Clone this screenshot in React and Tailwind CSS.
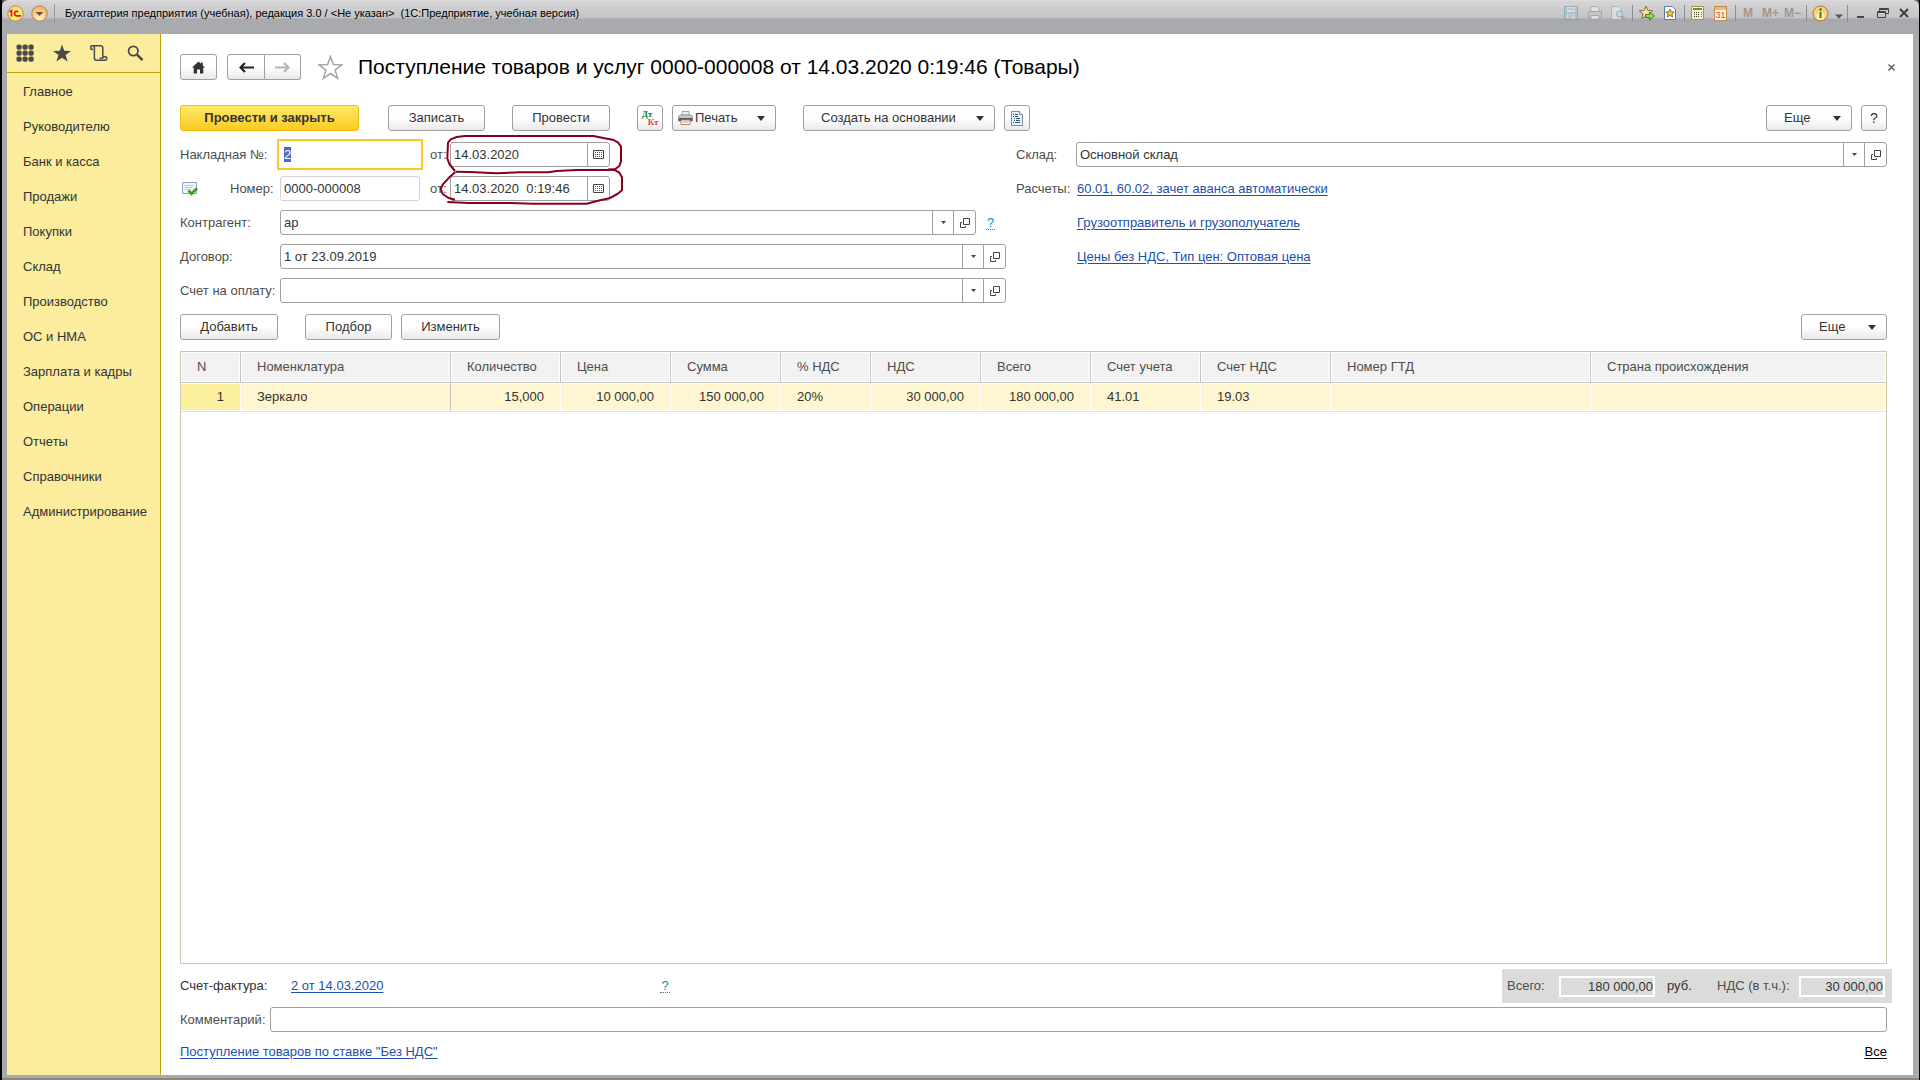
import { useEffect, useRef } from "react";

const MENU = [
  "Главное", "Руководителю", "Банк и касса", "Продажи", "Покупки", "Склад", "Производство",
  "ОС и НМА", "Зарплата и кадры", "Операции", "Отчеты", "Справочники", "Администрирование",
];

const COLUMNS = [
  { title: "N", width: "w-[60px]", value: "1", right: true },
  { title: "Номенклатура", width: "w-[210px]", value: "Зеркало", strong: true },
  { title: "Количество", width: "w-[110px]", value: "15,000", right: true },
  { title: "Цена", width: "w-[110px]", value: "10 000,00", right: true },
  { title: "Сумма", width: "w-[110px]", value: "150 000,00", right: true },
  { title: "% НДС", width: "w-[90px]", value: "20%" },
  { title: "НДС", width: "w-[110px]", value: "30 000,00", right: true },
  { title: "Всего", width: "w-[110px]", value: "180 000,00", right: true },
  { title: "Счет учета", width: "w-[110px]", value: "41.01" },
  { title: "Счет НДС", width: "w-[130px]", value: "19.03" },
  { title: "Номер ГТД", width: "w-[260px]", value: "" },
  { title: "Страна происхождения", width: "", value: "" },
];

const STAR = "M12 1.500l2.700 7.700 8.300.2-6.500 5.100 2.300 7.900L12 17.800l-6.800 4.600 2.300-7.900L1 9.400l8.300-.2z";

function Caret({ small }) {
  return small ? (
    <svg width="5" height="3" viewBox="0 0 5 3" aria-hidden="true"><path d="M0 0h5L2.500 3z" fill="#444" /></svg>
  ) : (
    <svg width="8" height="5" viewBox="0 0 8 5" aria-hidden="true"><path d="M0 0h8L4 5z" fill="#333" /></svg>
  );
}

function OpenIcon() {
  return (
    <svg width="10" height="10" viewBox="0 0 10 10" fill="none" stroke="#444" aria-hidden="true">
      <path d="M3.500 .5h6v6h-6zM2 4.500H.5v5h5V8" />
    </svg>
  );
}

function CalendarIcon() {
  return (
    <svg width="11" height="9" viewBox="0 0 11 9" aria-hidden="true">
      <path d="M.5.5h10v8H.5z" fill="none" stroke="#444" />
      <path d="M2 2.500h7M2 4.500h7M2 6.500h7" stroke="#555" strokeDasharray="1 1" />
    </svg>
  );
}

function Button({ className, children, ...rest }) {
  return (
    <button
      type="button"
      className={`flex h-[26px] shrink-0 items-center rounded-[3px] border border-[#a0a0a0] bg-linear-to-b from-white from-50% to-[#e9e9e9] text-[#333] ${className}`}
      {...rest}
    >
      {children}
    </button>
  );
}

function MoreButton({ label }) {
  return (
    <Button className="w-[86px] justify-between pr-[10px] pl-[17px]" aria-label={label}>
      Еще <Caret />
    </Button>
  );
}

const BOX = "flex h-[25px] rounded-[3px] border border-[#a0a0a0] bg-white";

function Combo({ id, value }) {
  return (
    <div className={`${BOX} min-w-0 flex-1`}>
      <input id={id} defaultValue={value} className="min-w-0 flex-1 px-[3px] text-[#333] outline-none" />
      <button type="button" aria-label="Выбрать из списка" className="flex w-[21px] items-center justify-center border-l border-[#a0a0a0]"><Caret small /></button>
      <button type="button" aria-label="Открыть" className="flex w-[22px] items-center justify-center border-l border-[#a0a0a0]"><OpenIcon /></button>
    </div>
  );
}

function DateField({ id, value }) {
  return (
    <div className={`${BOX} w-[160px]`}>
      <input id={id} defaultValue={value} className="min-w-0 flex-1 px-[3px] text-[#333] outline-none" />
      <button type="button" aria-label="Календарь" className="flex w-[22px] items-center justify-center border-l border-[#a0a0a0]"><CalendarIcon /></button>
    </div>
  );
}

function Help() {
  return <a href="#help" className="border-b border-dotted border-[#1a86c0] px-px leading-[13px] text-[#1a86c0]">?</a>;
}

const LINK = "text-[#1c4fae] underline underline-offset-2";

function TitleBar() {
  const sep = "h-[17px] w-px bg-[#8e8e90]";
  const memory = "text-[12px] font-bold text-[#a3958e]";
  return (
    <header className="flex h-[34px] shrink-0 items-start justify-between rounded-t-[6px] border-t border-[#dcdcdc] bg-linear-to-b from-[#d6d6d8] from-0% via-[#c4c4c6] via-50% to-[#a9aaad] to-55% pr-[10px] pl-[5px]">
      <div className="flex h-[24px] items-center">
        <svg width="17" height="17" viewBox="0 0 17 17" aria-hidden="true">
          <defs>
            <radialGradient id="logo" cx=".5" cy=".75" r=".7"><stop offset="0" stopColor="#fff36a" /><stop offset="1" stopColor="#fbd978" /></radialGradient>
            <radialGradient id="orb" cx=".5" cy=".8" r=".8"><stop offset="0" stopColor="#fff0c4" /><stop offset="1" stopColor="#f0b060" /></radialGradient>
          </defs>
          <circle cx="8.500" cy="8.500" r="7.700" fill="url(#logo)" stroke="#b88a4a" />
          <path d="M2.500 6.800l2-1.300v6" fill="none" stroke="#d5201c" strokeWidth="1.600" />
          <path d="M11.200 7a2.200 2.200 0 1 0-1.600 3.800h4.400" fill="none" stroke="#d5201c" strokeWidth="1.700" />
        </svg>
        <svg className="ml-[7px]" width="17" height="17" viewBox="0 0 17 17" aria-hidden="true">
          <circle cx="8.500" cy="8.500" r="7.700" fill="url(#orb)" stroke="#a98358" />
          <path d="M4.500 7h8l-4 4z" fill="#6d5540" />
        </svg>
        <span className="ml-[6px] h-[19px] w-px bg-[#98989a]" />
        <h1 className="ml-[10px] text-[11px] whitespace-pre text-black">{"Бухгалтерия предприятия (учебная), редакция 3.0 / <Не указан>  (1С:Предприятие, учебная версия)"}</h1>
      </div>
      <div className="flex h-[24px] items-center">
        <button type="button" aria-label="Сохранить" className="opacity-60">
          <svg width="16" height="16" viewBox="0 0 16 16"><path d="M1.500 1.500h13v13h-13z" fill="#9dbdd2" stroke="#6f97b0" /><path d="M4 2h8v5H4zM4 9.500h8V14H4z" fill="#e4e9ec" /><path d="M5 11h6M5 13h4M5 4h6" stroke="#7fa2b8" /></svg>
        </button>
        <button type="button" aria-label="Печать" className="ml-[8px] opacity-60">
          <svg width="16" height="16" viewBox="0 0 16 16"><path d="M4 1.500h6l2 2V7H4z" fill="#eee" stroke="#8fa3b0" /><path d="M1.500 6.500h13v6h-13z" fill="#c9beb8" stroke="#988c86" /><path d="M4 10.500h8v4H4z" fill="#eee" stroke="#b48f7c" /></svg>
        </button>
        <button type="button" aria-label="Предварительный просмотр" className="ml-[7px] opacity-60">
          <svg width="16" height="16" viewBox="0 0 16 16"><path d="M1.500 1.500h7l3 3v10h-10z" fill="#e5eaee" stroke="#93a9b8" /><circle cx="9.500" cy="9" r="3" fill="#c8dfee" stroke="#7a9cb3" /><path d="M11.500 11l3.500 3.500" stroke="#a98a78" strokeWidth="2" /></svg>
        </button>
        <span className={`ml-[6px] ${sep}`} />
        <button type="button" aria-label="Добавить в избранное" className="ml-[6px]">
          <svg width="16" height="16" viewBox="0 0 16 16"><path d="M7 1l1.800 4.400 4.900.4-3.700 3 1.200 4.700L7 11l-4.200 2.500L4 8.800.3 5.800l4.900-.4z" fill="#ffe2a0" stroke="#8b6a3c" /><path d="M6.500 9.500h4V7l5 4-5 4v-2.500h-4z" fill="#8be04a" stroke="#2c7a18" strokeWidth=".9" /></svg>
        </button>
        <button type="button" aria-label="Избранное" className="ml-[8px]">
          <svg width="14" height="16" viewBox="0 0 14 16"><path d="M1.500 1.500h8l3 3v10h-11z" fill="#fff" stroke="#557a9c" /><path d="M7 4l1.200 2.800 3 .2-2.300 2 .8 3L7 10.400 4.300 12l.8-3-2.300-2 3-.2z" fill="#ffc94d" stroke="#6b5230" strokeWidth=".8" /></svg>
        </button>
        <span className={`ml-[7px] ${sep}`} />
        <button type="button" aria-label="Калькулятор" className="ml-[6px]">
          <svg width="13" height="16" viewBox="0 0 13 16"><path d="M.5 1.500h12v13H.5z" fill="#fff3c8" stroke="#b58a50" /><path d="M2 3h9v2H2z" fill="#45a03c" /><path d="M3 7.500h6M3 9.500h6M3 11.500h6" stroke="#3a3028" strokeDasharray="1 1" /><path d="M10.500 7v5" stroke="#d8473a" strokeDasharray="1 1" /></svg>
        </button>
        <button type="button" aria-label="Календарь" className="ml-[10px] flex h-[15px] w-[13px] flex-col border border-[#c08a50] bg-[#fff6dc]">
          <span className="h-[3px] w-full bg-[#f3b96a]" />
          <span className="w-full text-center text-[9px] leading-[10px] text-[#e23a20]">31</span>
        </button>
        <span className={`ml-[8px] ${sep}`} />
        <span className={`ml-[7px] ${memory}`}>M</span>
        <span className={`ml-[9px] ${memory}`}>M+</span>
        <span className={`ml-[5px] ${memory}`}>M−</span>
        <span className={`ml-[5px] ${sep}`} />
        <button type="button" aria-label="Информация" className="ml-[5px]">
          <svg width="17" height="17" viewBox="0 0 17 17"><circle cx="8.500" cy="8.500" r="7.500" fill="#fbd07c" stroke="#a87838" /><circle cx="8.500" cy="11" r="4" fill="#ffe9a8" /><path d="M8.500 7v6" stroke="#3f7a1c" strokeWidth="2" /><circle cx="8.500" cy="4.500" r="1.200" fill="#3f7a1c" /></svg>
        </button>
        <svg className="mt-[6px] ml-[6px]" width="8" height="5" viewBox="0 0 8 5" aria-hidden="true"><path d="M0 .5h8L4 4.500z" fill="#555" /></svg>
        <span className={`ml-[4px] ${sep}`} />
        <button type="button" aria-label="Свернуть" className="ml-[9px]">
          <svg width="8" height="12" viewBox="0 0 8 12"><path d="M0 10h7" stroke="#444" strokeWidth="2" /></svg>
        </button>
        <button type="button" aria-label="Восстановить" className="ml-[12px]">
          <svg width="12" height="10" viewBox="0 0 12 10" fill="none" stroke="#444"><path d="M2.500 3V.5h9v5H9" /><path d="M3 1.500h8" /><path d="M.5 3.500h8v6h-8zM.5 4.500h8" /></svg>
        </button>
        <button type="button" aria-label="Закрыть" className="ml-[10px]">
          <svg width="10" height="10" viewBox="0 0 10 10"><path d="M1 1l8 8M9 1L1 9" stroke="#444" strokeWidth="2.200" /></svg>
        </button>
      </div>
    </header>
  );
}

function Sidebar() {
  return (
    <nav className="flex w-[154px] shrink-0 flex-col border-r border-[#bfa20d] bg-[#fbec9e]">
      <div className="flex h-[39px] items-center gap-[19px] border-b border-[#bfa20d] pl-[9px] text-[#4a4a4a]">
        <button type="button" aria-label="Разделы">
          <svg width="18" height="18" viewBox="0 0 18 18" fill="currentColor">
            {[3, 9, 15].map((y) => [3, 9, 15].map((x) => <rect key={`${x}-${y}`} x={x - 2.5} y={y - 2.5} width="5.200" height="5.200" rx="1.800" />))}
          </svg>
        </button>
        <button type="button" aria-label="Избранное">
          <svg width="18" height="18" viewBox="0 0 24 24" fill="currentColor"><path d="M12 .5l3 8.500 9 .2-7.200 5.400 2.700 8.800L12 18.200l-7.500 5.200 2.700-8.800L0 9.200 9 9z" /></svg>
        </button>
        <button type="button" aria-label="История">
          <svg width="18" height="17" viewBox="0 0 18 17" fill="none" stroke="currentColor" strokeWidth="1.500"><path d="M3 4.500H2.500a1.900 1.900 0 1 1 1.900-1.900v10.600a2 2 0 0 0 2 2H15a1.800 1.800 0 1 0-1.700-2.400M2.500.800h8.300a2 2 0 0 1 2 2v9.500M13.200 13.200H9.500" /></svg>
        </button>
        <button type="button" aria-label="Поиск">
          <svg width="17" height="17" viewBox="0 0 17 17" fill="none" stroke="currentColor"><circle cx="6.300" cy="6" r="4.700" strokeWidth="1.800" /><path d="M10 9.700l5.500 5.500" strokeWidth="2.400" /></svg>
        </button>
      </div>
      <ul className="pt-px">
        {MENU.map((m) => (
          <li key={m}><a href="#section" className="flex h-[35px] items-center pl-[16px] whitespace-nowrap text-[#333]">{m}</a></li>
        ))}
      </ul>
    </nav>
  );
}

function FormHeader() {
  return (
    <div className="flex items-center">
      <Button className="w-[37px] justify-center" aria-label="Домой">
        <svg width="13" height="13" viewBox="0 0 13 13"><path d="M6.500.5L0 6.500h1.700V12.500h3.300V8.500h3v4h3.300V6.500H13L10.700 4.300V1.500H9v1.300z" fill="#333" /></svg>
      </Button>
      <div className="ml-[10px] flex">
        <Button className="w-[38px] justify-center rounded-r-none" aria-label="Назад">
          <svg width="15" height="11" viewBox="0 0 15 11" fill="none" stroke="#222" strokeWidth="2.200"><path d="M1.500 5.500H15M6 1L1.500 5.500 6 10" /></svg>
        </Button>
        <Button className="w-[36px] justify-center rounded-l-none border-l-0" aria-label="Вперед">
          <svg width="15" height="11" viewBox="0 0 15 11" fill="none" stroke="#b4b4b4" strokeWidth="2.200"><path d="M0 5.500h13.500M9 1l4.500 4.500L9 10" /></svg>
        </Button>
      </div>
      <button type="button" aria-label="В избранное" className="ml-[17px]">
        <svg width="25" height="25" viewBox="0 0 24 24" fill="none" stroke="#a6a6a6" strokeWidth="1.500"><path d={STAR} /></svg>
      </button>
      <h2 className="ml-[15px] flex-1 text-[21px] leading-[26px] text-black">Поступление товаров и услуг 0000-000008 от 14.03.2020 0:19:46 (Товары)</h2>
      <button type="button" aria-label="Закрыть форму" className="mr-[-9px] p-[1px]">
        <svg width="7" height="7" viewBox="0 0 7 7"><path d="M.5.5l6 6M6.500.5l-6 6" stroke="#555" strokeWidth="1.300" /></svg>
      </button>
    </div>
  );
}

function CommandBar() {
  return (
    <div className="mt-[25px] flex">
      <button type="button" className="h-[26px] w-[179px] shrink-0 rounded-[3px] border border-[#f0bd16] bg-linear-to-b from-[#ffea62] to-[#fbcb1c] font-bold text-[#333]">Провести и закрыть</button>
      <Button className="ml-[29px] w-[97px] justify-center">Записать</Button>
      <Button className="ml-[27px] w-[98px] justify-center">Провести</Button>
      <Button className="ml-[27px] w-[26px] flex-col justify-center font-[Liberation_Serif] text-[9px] leading-[8px] font-bold" aria-label="Дебет Кредит">
        <span className="pr-[6px] text-[#1e7a14]">Дт</span>
        <span className="pl-[6px] text-[#f0403c]">Кт</span>
      </Button>
      <Button className="ml-[9px] w-[104px] pr-[10px] pl-[5px]">
        <svg width="15" height="14" viewBox="0 0 15 14" aria-hidden="true"><path d="M4 .5h7V5H4z" fill="#e6f0f6" stroke="#9aa6ae" /><path d="M.5 5.500l2-1.500h10l2 1.500V10H.5z" fill="#c9c9c9" stroke="#8b8b8b" /><path d="M1 7h13v3H1z" fill="#5c5652" /><path d="M3 9h9v4.500H3z" fill="#fff" stroke="#a58b7c" /><path d="M4.500 11h6" stroke="#c59b80" /></svg>
        <span className="ml-[2px] flex-1 text-left">Печать</span>
        <Caret />
      </Button>
      <Button className="ml-[27px] w-[192px] justify-between pr-[10px] pl-[17px]">Создать на основании <Caret /></Button>
      <Button className="ml-[9px] w-[26px] justify-center" aria-label="Отчет">
        <svg width="12" height="15" viewBox="0 0 12 15"><path d="M.5.5h8l3 3v11H.5z" fill="#eaf3fa" stroke="#7890a4" /><path d="M8.500.5v3h3" fill="#fff" stroke="#7890a4" /><path d="M2 3.500h1M4 3.500h3M2 5.500h1M4 5.500h3M3 7.500h1M5 7.500h4M3 9.500h1M5 9.500h4M2 11.500h1M4 11.500h5" stroke="#34566f" /></svg>
      </Button>
      <div className="flex flex-1 justify-end gap-[9px]">
        <MoreButton label="Еще, команды формы" />
        <Button className="w-[26px] justify-center text-[14px]" aria-label="Справка">?</Button>
      </div>
    </div>
  );
}

const ROW = "flex h-[25px] items-center";
const LABEL = "w-[100px] shrink-0 whitespace-nowrap";

function LeftFields() {
  const number = useRef(null);
  useEffect(() => {
    number.current.focus();
    number.current.select();
  }, []);
  return (
    <div className="relative flex flex-col gap-[9px]">
      <div className={ROW}>
        <label htmlFor="invoice" className={LABEL}>Накладная №:</label>
        <input id="invoice" ref={number} defaultValue="2" className="-ml-[3px] h-[31px] w-[146px] border-2 border-[#fbc91c] bg-white px-[5px] text-[#333] outline-none selection:bg-[#4f68c4] selection:text-white" />
        <label htmlFor="invoiceDate" className="ml-[7px] w-[20px]">от:</label>
        <DateField id="invoiceDate" value="14.03.2020" />
      </div>
      <div className={ROW}>
        <svg className="ml-[2px]" width="16" height="14" viewBox="0 0 16 14" aria-hidden="true"><path d="M.5.500h14v11H.5z" fill="#f2f7fb" stroke="#8ba3bb" /><path d="M2.500 3.500h10M2.500 5.500h8M2.500 7.500h6" stroke="#b9c7d4" /><path d="M6.500 8.500l3 3.300 5.500-5.600" fill="none" stroke="#3fa01e" strokeWidth="2.800" /></svg>
        <label htmlFor="number" className="w-[82px] pl-[32px]">Номер:</label>
        <input id="number" defaultValue="0000-000008" className="h-[25px] w-[140px] rounded-[3px] border border-[#d2d2d2] bg-white px-[3px] text-[#333] outline-none" />
        <label htmlFor="numberDate" className="ml-[10px] w-[20px]">от:</label>
        <DateField id="numberDate" value={"14.03.2020\u00a0\u00a00:19:46"} />
      </div>
      <div className={ROW}>
        <label htmlFor="partner" className={LABEL}>Контрагент:</label>
        <Combo id="partner" value="ар" />
        <span className="flex w-[30px] pl-[10px]"><Help /></span>
      </div>
      <div className={ROW}>
        <label htmlFor="contract" className={LABEL}>Договор:</label>
        <Combo id="contract" value="1 от 23.09.2019" />
      </div>
      <div className={ROW}>
        <label htmlFor="bill" className={LABEL}>Счет на оплату:</label>
        <Combo id="bill" value="" />
      </div>
      <svg className="pointer-events-none absolute -top-[8px] left-[260px]" width="190" height="72" viewBox="840 132 570 216" fill="none" stroke="#86001c" strokeWidth="6" strokeLinejoin="round" aria-hidden="true">
        <path d="M885 243L868 222 862 205 864 158 872 148 890 141 915 138H1300L1330 144 1358 149 1374 157 1383 170V214L1378 228 1366 237 1345 240H1250L1190 243 1165 247H1080L1010 250 930 246 887 245" />
        <path d="M886 246L868 262 848 284 842 297 848 312 866 324 885 329M862 336L925 339H1050L1120 341H1280L1320 331 1348 325 1372 312 1386 301V262L1378 248 1366 241 1345 238" />
      </svg>
    </div>
  );
}

function RightFields() {
  return (
    <div className="flex flex-col gap-[9px]">
      <div className={ROW}>
        <label htmlFor="store" className="w-[60px]">Склад:</label>
        <Combo id="store" value="Основной склад" />
      </div>
      <div className={ROW}>
        <span className="w-[61px]">Расчеты:</span>
        <a href="#accounts" className={LINK}>60.01, 60.02, зачет аванса автоматически</a>
      </div>
      <div className={`${ROW} pl-[61px]`}><a href="#shipper" className={LINK}>Грузоотправитель и грузополучатель</a></div>
      <div className={`${ROW} pl-[61px]`}><a href="#prices" className={LINK}>Цены без НДС, Тип цен: Оптовая цена</a></div>
    </div>
  );
}

function GoodsTable() {
  return (
    <div className="mt-[11px] min-h-[120px] flex-1 border border-[#cdc8ac] bg-white">
      <table className="w-full table-fixed border-separate border-spacing-0">
        <thead>
          <tr className="h-[31px]">
            {COLUMNS.map((c, i) => (
              <th key={c.title} className={`${c.width} border-b border-[#c6c6c6] p-0 text-left font-normal text-[#4d4d4d] ${i < COLUMNS.length - 1 ? "border-r" : ""}`}>
                <div className="m-px flex h-[28px] items-center bg-[#f2f2f2] pl-[15px] whitespace-nowrap">{c.title}</div>
              </th>
            ))}
          </tr>
        </thead>
        <tbody>
          <tr>
            {COLUMNS.map((c, i) => (
              <td key={c.title} className={`h-[29px] border-t border-b border-t-white border-b-[#e2e2e2] p-0 text-[#333] ${c.strong ? "border-r border-r-[#c6c6c6]" : "border-r border-r-white"}`}>
                <div className={`mb-px h-[26px] px-[16px] leading-[26px] whitespace-nowrap ${i === 0 ? "bg-[#fcf09e]" : "bg-[#fdf6d0]"} ${c.right ? "text-right" : ""}`}>{c.value}</div>
              </td>
            ))}
          </tr>
        </tbody>
      </table>
    </div>
  );
}

function Totals() {
  const total = "h-[21px] border-2 border-white bg-[#dbdbdb] text-right text-[#333] outline-none";
  return (
    <div className="-mr-[5px] flex h-[34px] items-center bg-[#dbdbdb] pr-[7px] pl-[5px]">
      <label htmlFor="total" className="w-[52px]">Всего:</label>
      <input id="total" readOnly value="180 000,00" className={`${total} w-[96px]`} />
      <span className="ml-[12px] w-[50px] text-[#333]">руб.</span>
      <label htmlFor="vat" className="w-[82px] whitespace-nowrap">НДС (в т.ч.):</label>
      <input id="vat" readOnly value="30 000,00" className={`${total} w-[86px]`} />
    </div>
  );
}

export default function App() {
  return (
    <div className="flex h-screen min-h-[600px] flex-col border-r border-l-2 border-black bg-[#58565a] font-['Liberation_Sans',Arial,sans-serif] text-[13px] leading-[16px] text-[#4d4d4d]">
      <TitleBar />
      <div className="flex min-h-0 flex-1 border-r-[6px] border-b-[3px] border-l-[5px] border-[#a9aaae]">
        <Sidebar />
        <main className="flex min-w-0 flex-1 flex-col bg-white pt-[20px] pr-[26px] pb-[15px] pl-[19px]">
          <FormHeader />
          <CommandBar />
          <div className="mt-[11px] grid grid-cols-[826fr_871fr] gap-[10px]">
            <LeftFields />
            <RightFields />
          </div>
          <div className="mt-[11px] flex">
            <Button className="w-[98px] justify-center">Добавить</Button>
            <Button className="ml-[27px] w-[87px] justify-center">Подбор</Button>
            <Button className="ml-[9px] w-[99px] justify-center">Изменить</Button>
            <div className="flex flex-1 justify-end"><MoreButton label="Еще, команды таблицы" /></div>
          </div>
          <GoodsTable />
          <div className="mt-[5px] flex items-center">
            <span className="w-[111px] text-[#333]">Счет-фактура:</span>
            <a href="#invoice" className={LINK}>2 от 14.03.2020</a>
            <span className="ml-[277px] flex flex-1"><Help /></span>
            <Totals />
          </div>
          <div className="mt-[4px] flex items-center">
            <label htmlFor="comment" className="w-[90px]">Комментарий:</label>
            <input id="comment" className="h-[25px] min-w-0 flex-1 rounded-[3px] border border-[#a0a0a0] px-[3px] outline-none" />
          </div>
          <div className="mt-[12px] flex justify-between">
            <a href="#rate" className={LINK}>Поступление товаров по ставке "Без НДС"</a>
            <a href="#all" className="text-black underline underline-offset-2">Все</a>
          </div>
        </main>
      </div>
      <div className="h-[2px] shrink-0 bg-[#8b877c]" />
    </div>
  );
}
